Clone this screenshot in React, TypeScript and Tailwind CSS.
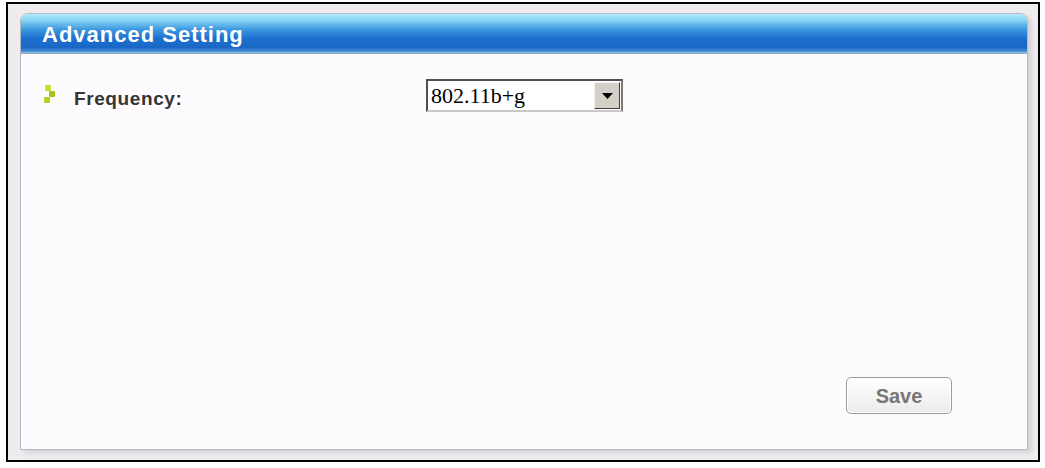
import React from 'react';

const FONT = { fontFamily: '"Liberation Sans", Arial, sans-serif' };

const Bullet = () => (
  <svg width="13" height="18" viewBox="0 0 13 18">
    <rect x="2" y="0" width="6" height="6" rx="1" fill="#c4e02a" />
    <rect x="6" y="6" width="6" height="6" rx="1" fill="#a2c41a" />
    <rect x="1" y="12" width="6" height="6" rx="1" fill="#b2d222" />
  </svg>
);

const FrequencySelect = () => (
  <div className="flex h-[33px] w-[197px] items-stretch border-2 border-t-[#505050] border-l-[#505050] border-r-[#7a7a7a] border-b-[#c8c8c8] bg-white">
    <div
      className="flex flex-1 items-center pl-[3px] pt-[1px] text-[22px] leading-none text-black"
      style={{ fontFamily: '"Liberation Serif", "Times New Roman", serif' }}
    >
      802.11b+g
    </div>
    <div className="m-[1px] flex w-[26px] items-center justify-center border border-t-[#f4f4f4] border-l-[#f4f4f4] border-r-[#404040] border-b-[#404040] bg-[#d4d0c8]">
      <svg width="11" height="6" viewBox="0 0 11 6">
        <path d="M0 0 H11 L5.5 6 Z" fill="#000" />
      </svg>
    </div>
  </div>
);

export default function App() {
  return (
    <div className="h-[468px] w-[1045px] bg-white pl-[6px] pt-[2px]" style={FONT}>
      <div className="h-[460px] w-[1034px] border-2 border-black bg-[#eeecef] pl-[12px] pt-[9px]">
        <div className="flex h-[437px] w-[1008px] flex-col rounded-t-[8px] border border-[#b4b8bf] bg-[#fdfbfd] shadow-[4px_3px_4px_rgba(0,0,0,0.10)]">
          <div className="flex h-[40px] items-center rounded-t-[7px] border-b border-[#8fa6bd] bg-[linear-gradient(to_bottom,#b4eafd_0%,#86d3f5_16%,#3c98df_40%,#1d71ce_62%,#1a67c5_86%,#4a8fd8_96%,#a8d0f0_100%)] pl-[21px] pt-[3px]">
            <span className="text-[22px] font-bold leading-none tracking-[1px] text-white">Advanced Setting</span>
          </div>

          <div className="flex flex-1 flex-col px-[22px] pt-[25px] pb-[35px]">
            <div className="flex items-start">
              <div className="mt-[6px] w-[31px]">
                <Bullet />
              </div>
              <div className="mt-[10px] w-[352px] text-[19px] font-bold leading-none tracking-[0.6px] text-[#353535]">
                Frequency:
              </div>
              <FrequencySelect />
            </div>

            <div className="flex-1" />

            <div className="flex justify-end pr-[53px]">
              <button className="h-[37px] w-[106px] rounded-[5px] border border-[#9c9c9c] bg-[linear-gradient(to_bottom,#ffffff,#ebebeb)] text-[20px] font-bold text-[#767676] shadow-[inset_0_0_0_1px_#ffffff]">
                Save
              </button>
            </div>
          </div>
        </div>
      </div>
    </div>
  );
}
